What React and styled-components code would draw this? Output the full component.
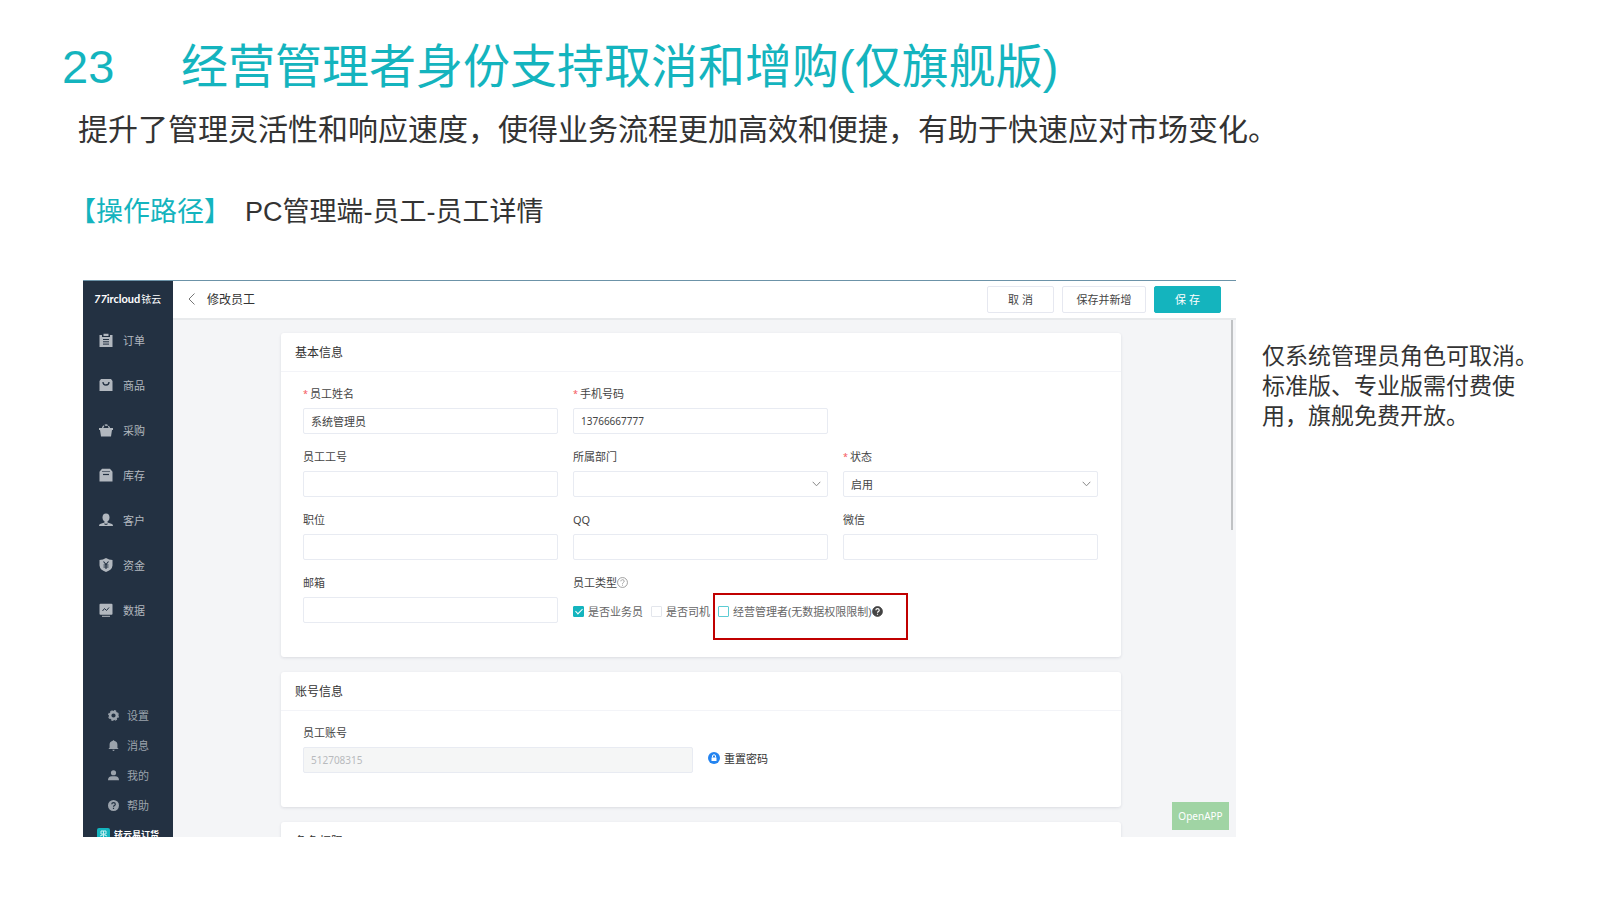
import React from 'react';
import styled, { createGlobalStyle } from 'styled-components';

const GlobalStyle = createGlobalStyle`
  * {
    box-sizing: border-box;
  }

  body {
    margin: 0;
    background: #fff;
    color: #333;
    font-family: 'Liberation Sans', 'Noto Sans CJK SC', sans-serif;
  }
`;

const Page = styled.main`
  display: flex;
  flex-direction: column;
  height: 100vh;
  min-height: 700px;
  padding: 37px 62px 63px;
`;

const Title = styled.h1`
  display: flex;
  align-items: center;
  margin: 0;
  color: #14b4be;
  font-size: 47px;
  font-weight: 400;
  line-height: 60px;
  white-space: nowrap;
`;

const TitleNumber = styled.span`
  flex: 0 0 119px;
`;

const Subtitle = styled.p`
  margin: 13px 0 0 16px;
  font-size: 30px;
  line-height: 40px;
`;

const Path = styled.p`
  display: flex;
  gap: 14px;
  margin: 42px 0 0 7px;
  font-size: 27px;
  line-height: 40px;
`;

const PathLabel = styled.span`
  color: #14b4be;
`;

const Body = styled.section`
  display: flex;
  flex: 1;
  gap: 26px;
  min-height: 0;
  margin: 48px 0 0 21px;
`;

const Note = styled.p`
  flex: none;
  margin: 61px 0 0;
  width: 276px;
  font-size: 23px;
  line-height: 30px;
`;

const Screen = styled.div`
  display: flex;
  flex: 1;
  min-width: 0;
  overflow: hidden;
  border-top: 1px solid #6c93a8;
  background: #f4f5f7;
  font-family: 'Noto Sans', 'Noto Sans CJK SC', sans-serif;
  font-size: 11px;
`;

const Sidebar = styled.nav`
  display: flex;
  flex: 0 0 90px;
  flex-direction: column;
  background: #233142;
`;

const Logo = styled.div`
  display: flex;
  flex: none;
  align-items: center;
  gap: 1px;
  height: 36px;
  padding: 0 0 2px 11px;
  color: #fff;
  font-family: Lato, 'Noto Sans CJK SC', sans-serif;
  font-size: 11px;
  font-weight: 700;
  white-space: nowrap;

  small {
    font-size: 10px;
    font-weight: 400;
  }
`;

const MenuLink = styled.a`
  display: flex;
  flex: none;
  align-items: center;
  gap: ${(props) => (props.$small ? 8 : 10)}px;
  height: ${(props) => (props.$small ? 30 : 45)}px;
  padding-left: ${(props) => (props.$small ? 25 : 16)}px;
  color: ${(props) => (props.$small ? '#9ba3ac' : '#b2b8bf')};
  text-decoration: none;
`;

const MenuIcon = styled.svg`
  width: ${(props) => (props.$small ? 11 : 14)}px;
  height: ${(props) => (props.$small ? 11 : 14)}px;
`;

const MenuFooter = styled.div`
  margin-top: 68px;
`;

const Brand = styled.div`
  display: flex;
  align-items: center;
  gap: 4px;
  height: 28px;
  padding-left: 14px;
  color: #fff;
  font-size: 9px;
  font-weight: 700;
  white-space: nowrap;
`;

const Workspace = styled.div`
  position: relative;
  display: flex;
  flex: 1;
  flex-direction: column;
  min-width: 0;
`;

const Toolbar = styled.header`
  display: flex;
  flex: none;
  align-items: center;
  gap: 8px;
  height: 39px;
  padding: 0 15px 1px 13px;
  border-bottom: 2px solid #e8eaec;
  background: #fff;
`;

const BackButton = styled.button`
  display: flex;
  padding: 0;
  border: 0;
  background: none;
  color: #777;
`;

const PageName = styled.h2`
  flex: 1;
  margin: 0 0 0 1px;
  font-size: 12px;
  font-weight: 400;
`;

const Button = styled.button`
  width: ${(props) => (props.$wide ? 84 : 67)}px;
  height: 27px;
  padding: 0;
  border: 1px solid ${(props) => (props.$primary ? '#14b4be' : '#e6e8f0')};
  border-radius: 2px;
  background: ${(props) => (props.$primary ? '#14b4be' : '#fff')};
  color: ${(props) => (props.$primary ? '#fff' : '#444')};
  font: inherit;
`;

const Content = styled.div`
  display: flex;
  flex: 1;
  flex-direction: column;
  align-items: center;
  gap: 15px;
  min-height: 0;
  overflow: hidden;
  padding: 13px 7px 0 0;
`;

const ScrollThumb = styled.div`
  position: absolute;
  top: 39px;
  right: 3px;
  width: 2px;
  height: 210px;
  background: #c0c2c4;
`;

const Card = styled.section`
  flex: none;
  width: calc(100% - 216px);
  border-radius: 3px;
  background: #fff;
  box-shadow: 0 1px 3px rgba(40, 50, 70, 0.12);
`;

const CardTitle = styled.h3`
  margin: 0;
  padding: 2px 0 0 14px;
  border-bottom: 1px solid #f3f4f8;
  font-size: 12px;
  font-weight: 400;
  line-height: 36px;
`;

const Fields = styled.div`
  display: grid;
  grid-template-columns: repeat(3, minmax(0, 1fr));
  gap: 12px 15px;
  padding: 11px 23px 32px 22px;
`;

const AccountRow = styled.div`
  display: flex;
  align-items: flex-end;
  gap: 15px;
  padding: 11px 23px 34px 22px;
`;

const FieldBox = styled.div`
  grid-column: ${(props) => props.$column || 'auto'};
  width: ${(props) => (props.$wide ? '390px' : 'auto')};
`;

const Label = styled.label`
  display: flex;
  align-items: center;
  height: 20px;
  margin-bottom: 5px;
  color: #444;
`;

const Required = styled.span`
  width: 7px;
  color: #f5545c;
  font-size: 9px;
`;

const Input = styled.input`
  display: block;
  width: 100%;
  height: 26px;
  padding: 0 7px;
  border: 1px solid #e8ebf2;
  border-radius: 2px;
  background: #fff;
  color: #444;
  font: inherit;
  font-size: ${(props) => (props.$numeric ? 10 : 11)}px;

  &:disabled {
    background: #f5f6f6;
    color: #b8babd;
  }
`;

const SelectBox = styled.div`
  display: grid;
  grid-template-columns: 1fr 16px;
  align-items: center;
  color: #888;

  svg {
    grid-area: 1 / 2;
    pointer-events: none;
  }
`;

const Select = styled(Input)`
  grid-area: 1 / 1 / 2 / 3;
  appearance: none;
`;

const CheckRow = styled.div`
  display: flex;
  align-items: center;
  height: 28px;
  gap: 8px;
  white-space: nowrap;
`;

const CheckLabel = styled.label`
  position: relative;
  display: flex;
  align-items: center;
  gap: 4px;
  color: #666;
`;

const CheckText = styled.span`
  display: flex;
  align-items: center;
`;

const Checkbox = styled.input`
  appearance: none;
  display: grid;
  place-items: center;
  width: 11px;
  height: 11px;
  margin: 0;
  border: 1px solid ${(props) => (props.$active ? '#5cccd3' : '#e3e6ec')};
  border-radius: 1px;
  background: #fff;

  &:checked {
    border-color: #14b4be;
    background: #14b4be;
  }

  &:checked::before {
    content: '';
    width: 3px;
    height: 6px;
    margin-bottom: 2px;
    border: solid #fff;
    border-width: 0 1px 1px 0;
    transform: rotate(45deg);
  }
`;

const Highlight = styled.span`
  position: absolute;
  top: -10px;
  left: -5px;
  width: 195px;
  height: 47px;
  border: 2px solid #c00000;
  pointer-events: none;
`;

const ResetButton = styled.button`
  display: flex;
  align-items: center;
  gap: 4px;
  height: 30px;
  padding: 0;
  border: 0;
  background: none;
  color: #333;
  font: inherit;
`;

const OpenApp = styled.button`
  position: absolute;
  right: 7px;
  bottom: 7px;
  width: 57px;
  height: 28px;
  padding: 0;
  border: 0;
  background: #a0d4a4;
  color: #fff;
  font: inherit;
  font-size: 10px;
`;

const bg = '#233142';

const icons = {
  order: (
    <>
      <path fill="currentColor" d="M.5 2H3v2h8V2h2.500v12H.5zM4.500.8h5V3h-5z" />
      <path stroke={bg} d="M4 6.500h6M4 8.800h6M4 11.100h6" />
    </>
  ),
  goods: (
    <>
      <path fill="currentColor" d="M2 1h10l1.500 2v10H.5V3z" />
      <path stroke={bg} strokeWidth="1.300" fill="none" d="M4 4c0 4 6 4 6 0" />
    </>
  ),
  purchase: (
    <>
      <path stroke="currentColor" strokeWidth="1.300" fill="none" d="M3.500 5.500C4 3 5.500 2 7 2s3 1 3.500 3.500" strokeDasharray="3 1" />
      <path fill="currentColor" d="M0 5h14v2h-1l-1 6.500H2L1 7H0z" />
    </>
  ),
  stock: (
    <>
      <path fill="currentColor" d="M3 .8h8l2.500 3V13.500H.5V3.800z" />
      <path stroke={bg} d="M3 3.500h8" strokeWidth="0.600" />
      <path stroke={bg} strokeWidth="1.200" d="M4 6.500h6" />
    </>
  ),
  customer: (
    <>
      <ellipse fill="currentColor" cx="7" cy="4.500" rx="3.500" ry="4" />
      <path fill="currentColor" d="M5.500 8h3v1.500L13 11q1 .5 1 2H0q0-1.500 1-2l4.500-1.500z" />
      <path stroke={bg} strokeWidth="0.700" fill="none" d="M5.500 10.500 6.300 12 7 10.500 7.700 12l.8-1.500" />
    </>
  ),
  money: (
    <>
      <path fill="currentColor" d="M7 0q3 2 6.500 2v5.500Q13 12 7 14 1 12 .5 7.500V2Q4 2 7 0z" />
      <path stroke={bg} strokeWidth="1.100" fill="none" d="M4.500 3.500 7 6.500l2.500-3M7 6.500V11M4.500 7h5M4.500 9h5" />
    </>
  ),
  data: (
    <>
      <rect fill="currentColor" x=".5" y=".8" width="13" height="11" rx="1" />
      <path stroke="currentColor" d="M3 13.300h8" />
      <path stroke={bg} fill="none" d="M3.500 8 5.500 5.500 7.500 7.500 10 4.500" />
    </>
  ),
  settings: (
    <>
      <circle cx="7" cy="7" r="4.300" fill="none" stroke="currentColor" strokeWidth="3.200" />
      <circle cx="7" cy="7" r="6.200" fill="none" stroke="currentColor" strokeWidth="1.500" strokeDasharray="2.870 2" />
    </>
  ),
  message: (
    <path fill="currentColor" d="M7 0l1 1c3 .8 4 3 4 5v4l1.500 1.500H.5L2 10V6c0-2 1-4.200 4-5zM5.500 12.300h3Q8 14 7 14t-1.500-1.700z" />
  ),
  mine: (
    <>
      <circle fill="currentColor" cx="7" cy="3.500" r="3.300" />
      <path fill="currentColor" d="M0 13q0-5 5-5h4q5 0 5 5z" />
    </>
  ),
  help: (
    <>
      <circle fill="currentColor" cx="7" cy="7" r="7" />
      <path stroke={bg} strokeWidth="1.500" fill="none" d="M4.800 5.500c0-3 4.500-2.800 4.500-.2C9.300 7 7 7 7 8.700M7 10v1.500" />
    </>
  ),
};

const mainMenu = [
  ['order', '订单'],
  ['goods', '商品'],
  ['purchase', '采购'],
  ['stock', '库存'],
  ['customer', '客户'],
  ['money', '资金'],
  ['data', '数据'],
];

const footerMenu = [
  ['settings', '设置'],
  ['message', '消息'],
  ['mine', '我的'],
  ['help', '帮助'],
];

const MenuItem = ({ icon, label, small }) => (
  <MenuLink href={`#${icon}`} $small={small}>
    <MenuIcon viewBox="0 0 14 14" $small={small}>{icons[icon]}</MenuIcon>
    {label}
  </MenuLink>
);

const Chevron = () => (
  <svg width="9" height="6" viewBox="0 0 9 6">
    <path d="M.7.800l3.800 4 3.800-4" fill="none" stroke="currentColor" />
  </svg>
);

const QuestionMark = ({ filled }) => (
  <svg width="11" height="11" viewBox="0 0 14 14">
    <circle cx="7" cy="7" r="6.300" fill={filled ? '#444' : 'none'} stroke={filled ? '#444' : '#888'} />
    <path
      d="M4.900 5.500c0-2.800 4.300-2.600 4.300-.2C9.200 7 7 7 7 8.600M7 9.800v1.300"
      fill="none"
      stroke={filled ? '#fff' : '#888'}
      strokeWidth={filled ? 1.5 : 1}
    />
  </svg>
);

const Field = ({ id, label, required, options, column, wide, ...rest }) => (
  <FieldBox $column={column} $wide={wide}>
    <Label htmlFor={id}>
      {required && <Required>*</Required>}
      {label}
    </Label>
    {options ? (
      <SelectBox>
        <Select as="select" id={id}>
          {options.map((option) => <option key={option}>{option}</option>)}
        </Select>
        <Chevron />
      </SelectBox>
    ) : (
      <Input id={id} {...rest} />
    )}
  </FieldBox>
);

const AppSidebar = () => (
  <Sidebar>
    <Logo>
      <span><i>77</i>ircloud</span>
      <small>铱云</small>
    </Logo>
    {mainMenu.map(([icon, label]) => <MenuItem key={icon} icon={icon} label={label} />)}
    <MenuFooter>
      {footerMenu.map(([icon, label]) => <MenuItem key={icon} icon={icon} label={label} small />)}
      <Brand>
        <svg width="13" height="13" viewBox="0 0 13 13">
          <rect width="13" height="13" rx="2" fill="#14b4be" />
          <path d="M4 3h5v3H4zM3 8q3.500-3 7 0M4 10h5M6.500 3v7" fill="none" stroke="#c8f0f2" />
        </svg>
        铱云易订货
      </Brand>
    </MenuFooter>
  </Sidebar>
);

const BasicInfo = () => (
  <Card>
    <CardTitle>基本信息</CardTitle>
    <Fields>
      <Field id="name" label="员工姓名" required defaultValue="系统管理员" />
      <Field id="phone" label="手机号码" required defaultValue="13766667777" $numeric />
      <Field id="code" label="员工工号" column="1" />
      <Field id="department" label="所属部门" options={['']} />
      <Field id="status" label="状态" required options={['启用', '停用']} />
      <Field id="position" label="职位" />
      <Field id="qq" label="QQ" />
      <Field id="wechat" label="微信" />
      <Field id="email" label="邮箱" />
      <FieldBox>
        <Label as="div">
          员工类型
          <QuestionMark />
        </Label>
        <CheckRow>
          <CheckLabel>
            <Checkbox type="checkbox" defaultChecked />
            是否业务员
          </CheckLabel>
          <CheckLabel>
            <Checkbox type="checkbox" />
            是否司机
          </CheckLabel>
          <CheckLabel>
            <Checkbox type="checkbox" $active />
            <CheckText>
              经营管理者(无数据权限限制)
              <QuestionMark filled />
            </CheckText>
            <Highlight />
          </CheckLabel>
        </CheckRow>
      </FieldBox>
    </Fields>
  </Card>
);

const AccountInfo = () => (
  <Card>
    <CardTitle>账号信息</CardTitle>
    <AccountRow>
      <Field id="account" label="员工账号" defaultValue="512708315" wide disabled $numeric />
      <ResetButton type="button">
        <svg width="12" height="12" viewBox="0 0 12 12">
          <circle cx="6" cy="6" r="6" fill="#2484f0" />
          <path d="M3.500 5.500h5v3.500h-5z" fill="#fff" />
          <path d="M4.500 5.500V4q0-1.200 1.500-1.200T7.500 4v1.500" fill="none" stroke="#fff" />
        </svg>
        重置密码
      </ResetButton>
    </AccountRow>
  </Card>
);

const App = () => (
  <>
    <GlobalStyle />
    <Page>
      <Title>
        <TitleNumber>23</TitleNumber>
        <span>经营管理者身份支持取消和增购(仅旗舰版)</span>
      </Title>
      <Subtitle>提升了管理灵活性和响应速度，使得业务流程更加高效和便捷，有助于快速应对市场变化。</Subtitle>
      <Path>
        <PathLabel>【操作路径】</PathLabel>
        <span>PC管理端-员工-员工详情</span>
      </Path>
      <Body>
        <Screen>
          <AppSidebar />
          <Workspace>
            <Toolbar>
              <BackButton type="button" aria-label="返回">
                <svg width="12" height="14" viewBox="0 0 12 14">
                  <path d="M8.500 1.500 3 7l5.500 5.500" fill="none" stroke="currentColor" />
                </svg>
              </BackButton>
              <PageName>修改员工</PageName>
              <Button type="button">取 消</Button>
              <Button type="button" $wide>保存并新增</Button>
              <Button type="button" $primary>保 存</Button>
            </Toolbar>
            <Content>
              <BasicInfo />
              <AccountInfo />
              <Card>
                <CardTitle>角色权限</CardTitle>
              </Card>
            </Content>
            <ScrollThumb />
            <OpenApp type="button">OpenAPP</OpenApp>
          </Workspace>
        </Screen>
        <Note>
          仅系统管理员角色可取消。
          <br />
          标准版、专业版需付费使
          <br />
          用，旗舰免费开放。
        </Note>
      </Body>
    </Page>
  </>
);

export default App;
